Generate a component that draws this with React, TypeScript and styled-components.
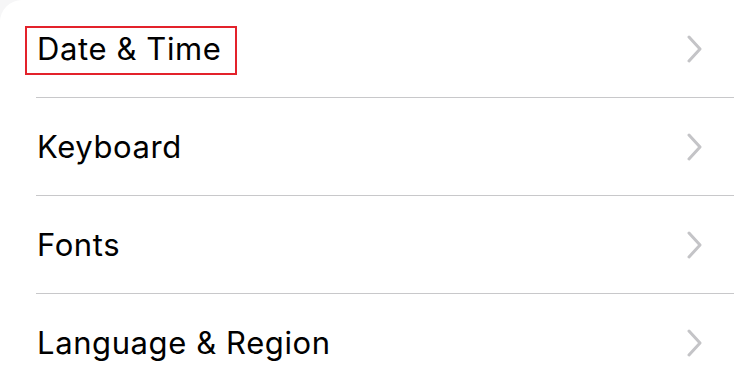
import React from "react";
import styled, { createGlobalStyle } from "styled-components";

const Global = createGlobalStyle`
  html, body { margin: 0; padding: 0; background: #f6f6f7; }
  body { width: 734px; height: 388px; overflow: hidden; }
`;

const Card = styled.div`
  background: #ffffff;
  width: 734px;
  height: 388px;
  border-top-left-radius: 22px;
  overflow: hidden;
  font-family: Inter, "Noto Sans", sans-serif;
`;

const Row = styled.div`
  display: flex;
  align-items: center;
  height: 97px;
  padding-left: 37px;
  padding-right: 32px;
`;

const Divider = styled.div`
  height: 1px;
  margin-left: 36px;
  background: #c8c8ca;
`;

const Label = styled.span<{ $highlight?: boolean }>`
  flex: 1;
  font-size: 31px;
  color: #000;
  letter-spacing: 0.6px;
  line-height: 1;
  position: relative;
  ${(p) =>
    p.$highlight
      ? `&::after { content: ""; position: absolute; left: -12px; top: -7.5px; width: 212px; height: 49px; border: 2.5px solid #e3222b; box-sizing: border-box; }`
      : ""}
`;

const LabelText = styled.span`
  display: inline-block;
`;

const Chevron = () => (
  <svg width="16" height="28" viewBox="0 0 16 28" fill="none">
    <path d="M3 2 L14 14 L3 26" stroke="#c4c4c7" strokeWidth="3" strokeLinecap="round" strokeLinejoin="round" />
  </svg>
);

const items = ["Date & Time", "Keyboard", "Fonts", "Language & Region"];

export default function App() {
  return (
    <>
      <Global />
      <Card>
        {items.map((t, i) => (
          <React.Fragment key={t}>
            {i > 0 && <Divider />}
            <Row>
              <Label $highlight={i === 0}>
                <LabelText>{t}</LabelText>
              </Label>
              <Chevron />
            </Row>
          </React.Fragment>
        ))}
      </Card>
    </>
  );
}
